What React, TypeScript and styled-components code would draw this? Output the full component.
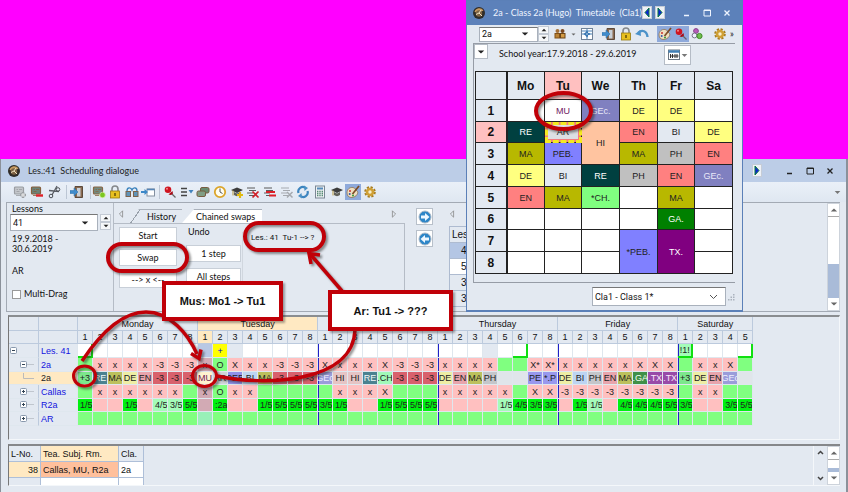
import React from "react";
import styled, { createGlobalStyle, css } from "styled-components";

const GlobalStyle = createGlobalStyle`
  * { box-sizing: border-box; }
  body { margin: 0; background: #ff00ff; }
  button, input, select { font: inherit; color: inherit; margin: 0; }
`;

const FACE = "#e3e9f1";
const GREEN = "#80ff80";
const BRIGHT = "#00f010";
const MINT = "#a4fcb8";
const PINK = "#ffc0c0";
const RED = "#d8606c";
const MARK = "#c00008";

/* ---------- shared parts ---------- */

const Desktop = styled.div`
  position: relative;
  min-height: 100vh;
  padding-top: 159px;
  display: flex;
  flex-direction: column;
  background: #ff00ff;
  color: #111;
  font: 9px/10px Lato, "Liberation Sans", sans-serif;
`;

const TitleBar = styled.header<{ $active?: boolean }>`
  display: flex;
  align-items: center;
  height: ${(p) => (p.$active ? 24 : 23)}px;
  padding: ${(p) => (p.$active ? "0 7px 0 5px" : "0 8px 0 6px")};
  background: ${(p) => (p.$active ? "#5c81ba" : "#bccde7")};
  color: ${(p) => (p.$active ? "#eef4ff" : "#222")};
`;

const Title = styled.h1`
  margin: 0 0 0 7px;
  font: 9px/12px Lato, sans-serif;
  white-space: pre;
`;

const Spacer = styled.div`
  flex: 1;
`;

const IconButton = styled.button<{ $on?: boolean; $w?: number }>`
  width: ${(p) => p.$w ?? 16}px;
  height: 16px;
  padding: 0;
  border: 0;
  display: flex;
  align-items: center;
  justify-content: center;
  background: ${(p) => (p.$on ? "#8faadb" : "transparent")};
`;

const NavButton = styled.button`
  width: 10px;
  height: 13px;
  padding: 0;
  border: 1px solid #c5ccd6;
  background: #eef1f6;
  display: flex;
  align-items: center;
  justify-content: center;
`;

const NavPair = styled.div`
  display: flex;
  align-self: flex-start;
  gap: 3px;
  padding: 5px 0 0;
`;

const WindowButtons = styled.div`
  display: flex;
  gap: 4px;
`;

const MainControls = styled.div`
  margin-left: 20px;
`;

const Separator = styled.span`
  width: 1px;
  height: 14px;
  margin-left: 3px;
  background: #bcc6d4;
`;

const PlainButton = styled.button`
  height: 17px;
  padding: 0;
  border: 1px solid #c8cfd8;
  background: #fff;
  text-align: center;
  display: block;
  width: 100%;
`;

const ComboBox = styled.label<{ $w: number; $h: number }>`
  display: grid;
  grid-template-columns: 1fr 16px;
  width: ${(p) => p.$w}px;
  height: ${(p) => p.$h}px;
  border: 1px solid #a9b1bc;
  border-top-color: #777;
  background: #fff;
  align-items: center;
  font: 9px/12px Roboto, sans-serif;
  select {
    grid-area: 1 / 1 / 2 / 3;
    appearance: none;
    border: 0;
    background: transparent;
    padding: 0 0 0 2px;
    height: 100%;
    width: 100%;
    outline: 0;
  }
  svg {
    grid-area: 1 / 2;
    pointer-events: none;
  }
`;

const Spinner = styled.div`
  display: flex;
  flex-direction: column;
  width: 11px;
  button {
    height: 8px;
    padding: 0;
    border: 1px solid #c3cad4;
    background: #f6f8fa;
    display: flex;
    align-items: center;
    justify-content: center;
  }
`;

const Triangle = ({ dir, size = 5, color = "#222", hollow = false }: { dir: "up" | "down" | "left" | "right"; size?: number; color?: string; hollow?: boolean }) => {
  const points = { up: "1,7 5,3 9,7", down: "1,3 9,3 5,7", left: "7,1 3,5 7,9", right: "3,1 7,5 3,9" }[dir];
  return (
    <svg width={size + 3} height={size + 3} viewBox="0 0 10 10" aria-hidden="true">
      <polygon points={points} fill={hollow ? "none" : color} stroke={hollow ? color : "none"} />
    </svg>
  );
};

/* ---------- icons ---------- */

const Svg = ({ children }: { children: React.ReactNode }) => (
  <svg width="14" height="14" viewBox="0 0 14 14" fill="none" aria-hidden="true">{children}</svg>
);

const board = (fill: string, stroke: string) => (
  <>
    <rect x="1.5" y="2" width="9" height="7" rx="1" fill={fill} stroke={stroke} strokeWidth="1.2" />
    <path d="M3.500 4.500h1.500M6 4.500h3M3.500 6.500h3M3 10.500h4" stroke={stroke} strokeWidth=".8" />
  </>
);
const lines = (color: string) => <path d="M1 3h8M3 5.500h7M1 8h6M3 10.500h5" stroke={color} strokeWidth="1.200" />;
const cap = <><path d="M1 5l6-2.500L13 5 7 8z" fill="#3c3c3c" /><path d="M4 7v3c2 1.500 4 1.500 6 0V7L7 8.500z" fill="#62625a" /><path d="M3 5.500v5" stroke="#b89a40" /></>;

const icons: Record<string, React.ReactNode> = {
  app: <><circle cx="7" cy="7" r="6" fill="#302c28" /><path d="M2.500 6a5 5 0 0 1 9-1.500L7 7z" fill="#c79a62" /><circle cx="7" cy="7.500" r="3.200" fill="#7d6244" /><path d="M4 8.500l3-1.500 3 3M7 7l2-3" stroke="#eee0c0" /></>,
  add: <>{board("#c3c6ca", "#9a9da2")}<path d="M10 7v6M7 10h6" stroke="#9c9fa4" strokeWidth="2.500" /><path d="M10 8v4M8 10h4" stroke="#eee" /></>,
  remove: <>{board("#6a8278", "#875f3c")}<path d="M6 10.500h7" stroke="#e02028" strokeWidth="2.400" /></>,
  cut: <><path d="M10 1L5 10M2 5.500l10 1" stroke="#5b5f66" strokeWidth="1.300" /><circle cx="4" cy="11" r="1.800" stroke="#4b4f55" /><circle cx="11" cy="4.500" r="1.800" stroke="#4b4f55" /></>,
  door: <><path d="M5 1.500h7.500v11H5z" fill="#8a6a50" stroke="#5c4a3c" /><path d="M7 3h3.500v8.500H7z" fill="#c8cfd6" /><path d="M0 5.500h4V3l4 4-4 4V8.500H0z" fill="#3f8ccc" stroke="#2a6da6" strokeWidth=".5" /></>,
  ok: <>{board("#728a80", "#8a6644")}<circle cx="10.500" cy="10" r="2.800" fill="#7cc820" stroke="#d8f0a8" strokeWidth=".7" /></>,
  lock: <><path d="M4 6V4a3 3 0 0 1 6 0v2" stroke="#85888c" strokeWidth="1.600" /><rect x="2.500" y="6" width="9" height="7" fill="#e8c020" stroke="#9a7a10" strokeWidth=".8" /><path d="M7 8v3" stroke="#66500a" strokeWidth="1.500" /></>,
  swap: <><path d="M2 6c0-4 4-4 5-1 1-3 5-3 5 1" stroke="#3d83bd" strokeWidth="1.400" /><rect x="1" y="6.500" width="4.500" height="5" fill="#5f93b8" stroke="#7d624c" /><rect x="8.500" y="6.500" width="4.500" height="5" fill="#5f93b8" stroke="#7d624c" /></>,
  move: <><rect x="6" y="4" width="7.500" height="7" fill="#fff" stroke="#8490a0" /><path d="M6 4.500h7.500" stroke="#5585b8" strokeWidth="1.600" /><path d="M0 6h3.500V4L7 7 3.500 10V8H0z" fill="#3d88c8" /></>,
  pin: <><path d="M8 8l4.500 4.500" stroke="#666" strokeWidth="1.300" /><circle cx="5" cy="4.700" r="3.300" fill="#d01420" /><path d="M5.500 9.500L9.500 6l.5 2.500-2 1.500z" fill="#a80c18" /><circle cx="4" cy="3.700" r="1" fill="#f08a8a" /></>,
  list: <><path d="M1 3.500h6M1 7h6M1 10.500h6" stroke="#444" strokeWidth="1.300" /><path d="M8.500 5h5L11 8.500z" fill="#4384bd" /></>,
  boards: <><rect x="4.500" y="2.500" width="8.500" height="5.500" rx="1.500" fill="#698b70" stroke="#785c40" /><rect x="1" y="6" width="8.500" height="5.500" rx="1.500" fill="#819e84" stroke="#785c40" /></>,
  clock: <><circle cx="7" cy="7" r="5.200" fill="#fffdf0" stroke="#dca52a" strokeWidth="1.800" /><path d="M7 3.500V7l2.500 1.500" stroke="#555" /></>,
  capAdd: <>{cap}<path d="M10 7v6M7 10h6" stroke="#e0ba10" strokeWidth="2.200" /></>,
  linesX: <>{lines("#5a5a5a")}<path d="M6.500 6.500l6 6M12.500 6.500l-6 6" stroke="#cf2028" strokeWidth="1.700" /></>,
  linesMinus: <>{lines("#5a5a5a")}<path d="M3 7h9M6 10.500h7" stroke="#dc2028" strokeWidth="2" /></>,
  linesOff: <>{lines("#a5a9af")}<path d="M7 7l5.500 5.500M12.500 7L7 12.500" stroke="#a5a9af" strokeWidth="1.500" /></>,
  refresh: <><path d="M2.500 8a4.500 4.500 0 0 1 7-5M11.500 6a4.500 4.500 0 0 1-7 5" stroke="#3d85bf" strokeWidth="2.200" /><path d="M8 .5l4 2.500-3.500 3zM6 13.500L2 11l3.500-3z" fill="#4b91c5" /></>,
  calc: <><rect x="2.500" y="1" width="9" height="12" fill="#eef1f4" stroke="#7b8794" /><path d="M4 3.500h6" stroke="#568bb9" strokeWidth="2" /><path d="M4 6.500h6M4 8.500h6M4 10.500h6" stroke="#568b74" strokeWidth="1.300" strokeDasharray="1.400 .9" /></>,
  cap,
  palette: <><path d="M1 8C1 4 4 2 7 2.500S9 5 11 6s0 6-5 6.500C3 12.700 1 11 1 8z" fill="#efdfc0" stroke="#8b7358" strokeWidth=".8" /><circle cx="4" cy="6" r="1" fill="#c33" /><circle cx="3.700" cy="9" r="1" fill="#35a" /><circle cx="7" cy="10.500" r="1" fill="#393" /><path d="M13 1L6.500 9" stroke="#7c4c26" strokeWidth="1.700" /></>,
  gear: <><circle cx="7" cy="7" r="4.800" stroke="#a87c20" strokeWidth="2" strokeDasharray="2.200 1.570" /><circle cx="7" cy="7" r="3" stroke="#cfa035" strokeWidth="2.600" fill="#f8eecb" /></>,
  people: <><circle cx="4.500" cy="4" r="2" fill="#a47038" /><circle cx="9.500" cy="4" r="2" fill="#7a4820" /><rect x="2" y="6.500" width="4.500" height="4.500" fill="#ba8234" stroke="#805018" /><rect x="7.500" y="6.500" width="4.500" height="4.500" fill="#d29a44" stroke="#6b4518" /></>,
  grid: <><rect x="1.500" y="1.500" width="11" height="11" fill="#fff" stroke="#6f8298" /><path d="M7 2v10M2 7h10M2 4h10" stroke="#4a83b9" /><path d="M7 3.500L9 6H5zM7 10.500L5 8h4zM3.500 7L6 5v4zM10.500 7L8 5v4z" fill="#3877b2" /></>,
  undo: <><path d="M3 6c4-4 9-2 9.500 4" stroke="#4b92c9" strokeWidth="2.400" /><path d="M0 7l5.500-4 .5 6z" fill="#4b92c9" /></>,
  venn: <><circle cx="6" cy="4" r="2.400" fill="#b85bbc" stroke="#85458a" /><circle cx="4.500" cy="8.500" r="2.400" fill="#eef" stroke="#778" /><circle cx="9.500" cy="9" r="2.600" fill="#6fc04c" stroke="#428a28" /></>,
  calendar: <><rect x="1.500" y="2" width="11" height="9.500" fill="#fff" stroke="#6d7884" /><path d="M1.500 3.500h11" stroke="#417fb5" strokeWidth="2.500" /><path d="M3.500 6v4M5.500 6v4M8 6v4M10 6v4M3.500 8h8" stroke="#333" /></>,
  right: <><circle cx="7" cy="7" r="6" fill="#2d86c8" stroke="#a8b8c8" /><path d="M3 5.500h4V3l4.500 4L7 11V8.500H3z" fill="#eef7ff" /></>,
  left: <><circle cx="7" cy="7" r="6" fill="#2d86c8" stroke="#a8b8c8" /><path d="M11 5.500H7V3L2.500 7 7 11V8.500h4z" fill="#eef7ff" /></>,
  min: <path d="M4 9.500h5" stroke="currentColor" strokeWidth="1.500" />,
  max: <path d="M4 4h6.500v6H4zM4 4.500h6.500" stroke="currentColor" />,
  close: <path d="M4.500 4.500l5 5M9.500 4.500l-5 5" stroke="currentColor" strokeWidth="1.300" />,
};

const Icon = ({ name }: { name: string }) => <Svg>{icons[name]}</Svg>;

const NavArrow = ({ flip }: { flip?: boolean }) => (
  <svg width="8" height="11" viewBox="0 0 8 11" aria-hidden="true">
    <path d={flip ? "M6 1v9L2 5.500z" : "M2 1v9l4-4.500z"} fill="#0a20d8" stroke="#0c7a3c" />
  </svg>
);

const Tool = ({ name, label, on }: { name: string; label: string; on?: boolean }) => (
  <IconButton type="button" aria-label={label} $on={on}><Icon name={name} /></IconButton>
);

const WindowControls = () => (
  <WindowButtons>
    {["min", "max", "close"].map((n) => <Tool key={n} name={n} label={n} />)}
  </WindowButtons>
);

/* ---------- main window ---------- */

const MainWindow = styled.main`
  flex: 1;
  display: flex;
  flex-direction: column;
  background: ${FACE};
  border: solid #8b919a;
  border-width: 0 2px 1px 1px;
`;

const Toolbar = styled.div`
  display: flex;
  align-items: center;
  height: 20px;
  padding: 0 5px 0 10px;
  background: linear-gradient(#eaf0f8, #dfe7f1);
`;

const ToolGroup = styled.div<{ $w: number; $m?: number }>`
  display: flex;
  justify-content: space-between;
  width: ${(p) => p.$w}px;
  margin: 0 ${(p) => p.$m ?? 4}px;
`;

const Upper = styled.section`
  display: flex;
  height: 110px;
  margin: 0 6px 0 5px;
  border: solid #a3aab4;
  border-width: 1px 0 1px 1px;
`;

const LessonPanel = styled.div`
  width: 107px;
  padding: 1px 2px 0 3px;
  border-right: 1px solid #b5bcc6;
`;

const FieldRow = styled.div`
  display: flex;
  gap: 2px;
`;

const FieldLabel = styled.label`
  display: block;
  height: 10px;
  padding-left: 2px;
`;

const Info = styled.p<{ $gap: number }>`
  margin: ${(p) => p.$gap}px 0 0 2px;
`;

const CheckLabel = styled.label`
  display: flex;
  align-items: center;
  gap: 3px;
  margin: 13px 0 0 2px;
  input {
    appearance: none;
    width: 9px;
    height: 9px;
    border: 1px solid #999;
    background: #fff;
  }
`;

const TabArea = styled.div`
  width: 291px;
  display: flex;
  flex-direction: column;
`;

const TabStrip = styled.div`
  display: flex;
  align-items: flex-end;
  height: 20px;
  padding: 0 5px 0 1px;
`;

const Tab = styled.button<{ $on?: boolean }>`
  height: 14px;
  border: 0;
  padding: ${(p) => (p.$on ? "0 7px 0 14px" : "0 6px 0 20px")};
  background: ${(p) => (p.$on ? "#fff" : "linear-gradient(125deg, transparent 10px, #98a0aa 10px, #98a0aa 11px, transparent 11px)")};
  border-top: 1px solid #aab1bb;
  clip-path: polygon(12px 0, 100% 0, 100% 100%, 0 100%);
`;

const StripArrow = styled.button`
  width: 12px;
  height: 16px;
  padding: 0;
  border: 0;
  background: transparent;
`;

const TabBody = styled.div`
  flex: 1;
  display: flex;
  gap: 8px;
  padding: 3px 4px 0 5px;
  border: solid #b5bcc6;
  border-width: 1px 1px 0 0;
`;

const ActionColumn = styled.div`
  display: flex;
  flex-direction: column;
  gap: 5px;
  width: 58px;
`;

const UndoGroup = styled.fieldset`
  width: 58px;
  margin: 0;
  padding: 8px 1px 0;
  border: 0;
  border-right: 1px solid #d1d7df;
  display: flex;
  flex-direction: column;
  gap: 6px;
  legend {
    padding: 0 0 0 2px;
  }
`;

const SwapInfo = styled.output`
  padding-top: 5px;
  white-space: pre;
  font: 8px/12px Roboto, sans-serif;
`;

const MoveColumn = styled.div`
  display: flex;
  flex-direction: column;
  gap: 5px;
  padding: 5px 12px 0 11px;
  button {
    width: 17px;
    height: 17px;
    background: #fff;
    border: 1px solid #b8c0ca;
  }
`;

const LessonTable = styled.table`
  border-collapse: collapse;
  background: #fff;
  font: 10px/14px "Liberation Sans", sans-serif;
  margin: 3px 0 0 4px;
  td, th {
    height: 16px;
    width: 60px;
    padding: 0 0 0 2px;
    border: 1px solid #aebbd0;
    font-weight: 400;
    text-align: left;
    background: #fff;
  }
  th { background: ${FACE}; }
  td { padding-left: 11px; }
  tr:nth-child(2) td { background: #b4c6e4; }
  tr:nth-child(n+4) td { background: ${FACE}; }
`;

const Scroll = styled.div`
  width: 13px;
  display: flex;
  flex-direction: column;
  background: #a9bbd8;
  border: 1px solid #cdd3db;
  button {
    height: 12px;
    padding: 0;
    border: 0;
    background: #fff;
    display: flex;
    align-items: center;
    justify-content: center;
  }
`;

const Thumb = styled.div<{ $h: number }>`
  height: ${(p) => p.$h}px;
  background: #fff;
  border-top: 1px solid #aaa;
`;

const ScrollBar = ({ thumb }: { thumb: number }) => (
  <Scroll>
    <button type="button" aria-label="Scroll up"><Triangle dir="up" color="#666" /></button>
    <Thumb $h={thumb} />
    <Spacer />
    <button type="button" aria-label="Scroll down"><Triangle dir="down" color="#666" /></button>
  </Scroll>
);

/* ---------- schedule grid ---------- */

const GridPanel = styled.section`
  height: 125px;
  margin: 3px 6px 0 7px;
  border: solid #f4f7fa;
  border-width: 2px 1px 1px 1px;
  border-top-color: #8a8d90;
  border-left-color: #777;
`;

const GridTable = styled.table`
  width: 744px;
  table-layout: fixed;
  border-collapse: separate;
  border-spacing: 0;
  font: 9px/12px "Liberation Sans", sans-serif;
  th, td {
    padding: 0;
    font-weight: 400;
    overflow: hidden;
    white-space: nowrap;
    text-align: center;
    border-right: 1px solid #dfe7ee;
    border-bottom: 1px solid #dfe7ee;
  }
`;

const GridRow = styled.tr<{ $h: number }>`
  height: ${(p) => p.$h}px;
`;

const DayHead = styled.th<{ $on?: boolean }>`
  && {
    background: ${(p) => (p.$on ? "#ffe9c2" : FACE)};
    border-color: #bccadd;
  }
`;

const TreeCell = styled.td<{ $on?: boolean }>`
  && {
    background: ${(p) => (p.$on ? "#ffe9c2" : FACE)};
    border-right-color: ${(p) => (p.$on ? "#ffe9c2" : "#bccadd")};
  }
`;

const TreeInner = styled.div<{ $level: number }>`
  display: flex;
  padding-left: ${(p) => p.$level * 10}px;
  height: 10px;
`;

const Expander = styled.button`
  width: 15px;
  height: 9px;
  padding: 0;
  border: 0;
  background: none;
  display: flex;
`;

const NameCell = styled.th<{ $on?: boolean }>`
  && {
    text-align: left;
    padding-left: 2px;
    color: ${(p) => (p.$on ? "#222" : "#1414e0")};
    background: ${(p) => (p.$on ? "#ffe9c2" : FACE)};
  }
`;

const Slot = styled.td<{ $bg: string; $fg?: string; $start?: boolean; $bracket?: boolean }>`
  && {
    background: ${(p) => p.$bg};
    color: ${(p) => p.$fg ?? "#222"};
    ${(p) => p.$start && css`box-shadow: inset 1px 0 #2020c8;`}
    ${(p) => p.$bracket && css`border-right: 2px solid #10e010; border-bottom: 2px solid #10e010;`}
  }
`;

const SlotText = styled.span<{ $left?: boolean }>`
  display: flex;
  justify-content: ${(p) => (p.$left ? "flex-start" : "center")};
  padding-left: ${(p) => (p.$left ? 2 : 0)}px;
  height: 12px;
  overflow: hidden;
`;

type Cell = { t?: string; bg: string; fg?: string; left?: boolean; bracket?: boolean };

const subjects: Record<string, [string, string, string?]> = {
  "+3": ["+3", "#7ce88c"], RE: ["RE", "#4a8290", "#f3f8f8"], MA: ["MA", "#bcc05c"], DE: ["DE", "#eeeea4"],
  EN: ["EN", "#e8a4ac"], "-3": ["-3", RED], MU: ["MU", "#fff3d0", "#702050"], AR: ["AR", "#cfd4d8"],
  PB: ["PEB", "#9090ea"], BI: ["BI", "#bcd4f2"], GE: ["GEc", "#9a9cda", "#eef"], HI: ["HI", "#e6c4c4"],
  CH: [".CH", "#a0f8b8"], PH: ["PH", "#c4c6ca"], _: ["", "#e0e5ea"], PE: ["PE", "#9898ee"],
  "*P": ["*.P", "#9898ee"], GA: [".GA", "#409048", "#f3fff3"], TX: [".TX", "#984aa8", "#f8e8fc"],
};

const parse = (line: string, make: (token: string, index: number) => Cell): Cell[] => line.split(/\s+/).map(make);

const mark = (token: string, i: number): Cell => {
  const bg = i === 8 ? "#d2aab4" : token === "g" || token === "O" ? GREEN : PINK;
  return { t: token === "g" ? "" : token, bg };
};

const room = (token: string, i: number): Cell => {
  if (token === "p") return { bg: i === 8 ? "#d2aab4" : PINK };
  const light = token.startsWith("l");
  return { t: light ? token.slice(1) : token, bg: light ? MINT : BRIGHT, left: true };
};

const lesson: Cell[] = Array.from({ length: 45 }, (_, i) => {
  if (i === 0 || i === 29 || i === 44) return { bg: "#fff", bracket: true };
  if (i === 8) return { bg: "#b8c8e4" };
  if (i === 9) return { t: "+", bg: "#ffff00", fg: "#0000d0" };
  if (i === 10 || i === 27) return { bg: FACE };
  if (i === 40) return { t: "!1!", bg: MINT, bracket: true };
  return { bg: "#fff" };
});

const rows: { name: string; level: number; sign: string; on?: boolean; h: number; cells: Cell[] }[] = [
  { name: "Les. 41", level: 0, sign: "-", h: 14, cells: lesson },
  { name: "2a", level: 1, sign: "-", h: 14, cells: parse("g x x x x -3 -3 -3 x O X x x -3 -3 -3 X x x x X -3 -3 -3 x x x x g g X* X* x x x x x X X X g x x X g", mark) },
  { name: "2a", level: 1, sign: "", on: true, h: 13, cells: parse("+3 RE MA DE EN -3 -3 -3 MU AR PB BI MA -3 -3 -3 GE HI HI RE CH -3 -3 -3 DE EN MA PH _ _ PE *P DE BI PH EN MA GA TX TX +3 DE EN GE _", (k) => ({ t: subjects[k][0], bg: subjects[k][1], fg: subjects[k][2] })) },
  { name: "Callas", level: 1, sign: "+", h: 14, cells: parse("g x x x x x x g x O x x g g g g g x x x X g g g x x x x x g X X -3 -3 -3 -3 -3 -3 -3 -3 g x x g g", mark) },
  { name: "R2a", level: 1, sign: "+", h: 13, cells: parse("1/5 p p 1/5 p l4/5 l3/5 5/5 p :2a p p 1/5 5/5 5/5 5/5 3/5 1/5 p p 1/5 5/5 5/5 5/5 p p p p l1/5 4/5 3/5 3/5 p 1/5 l1/5 p 4/5 4/5 4/5 5/5 3/5 p p 3/5 5/5", room) },
  { name: "AR", level: 1, sign: "+", h: 14, cells: Array.from({ length: 45 }, (_, i) => ({ bg: i === 8 ? "#98f0b8" : GREEN })) },
];

const days = [["Monday", 8], ["Tuesday", 8], ["Wednesday", 8], ["Thursday", 8], ["Friday", 8], ["Saturday", 5]] as const;
const periods = days.flatMap(([, n]) => Array.from({ length: n }, (_, i) => i + 1));

const ScheduleGrid = () => (
  <GridTable>
    <colgroup>
      <col width="30" />
      <col width="39" />
      {periods.map((_, i) => <col key={i} width="15" />)}
    </colgroup>
    <thead>
      <GridRow $h={14}>
        <DayHead /><DayHead />
        {days.map(([d, n]) => <DayHead key={d} colSpan={n} $on={d === "Tuesday"}>{d}</DayHead>)}
      </GridRow>
      <GridRow $h={13}>
        <DayHead /><DayHead />
        {periods.map((p, i) => <DayHead key={i} $on={i === 8}>{p}</DayHead>)}
      </GridRow>
    </thead>
    <tbody>
      {rows.map((r, k) => (
        <GridRow key={k} $h={r.h}>
          <TreeCell $on={r.on}>
            <TreeInner $level={r.level}>
              {r.sign ? (
                <Expander type="button" aria-label={`Toggle ${r.name}`}>
                  <svg width="15" height="9" viewBox="0 0 15 9" fill="none">
                    {r.level > 0 && <path d="M8 4.500h7" stroke="#c0c6ce" />}
                    <rect x="1.500" y="1.500" width="6" height="6" rx="1" fill="#fff" stroke="#8898ac" />
                    <path d={r.sign === "+" ? "M3 4.500h3M4.500 3v3" : "M3 4.500h3"} stroke="#345" />
                  </svg>
                </Expander>
              ) : (
                <svg width="15" height="10" viewBox="0 0 15 10" fill="none"><path d="M4.500 0v5.500H15" stroke="#bbb" /></svg>
              )}
            </TreeInner>
          </TreeCell>
          <NameCell scope="row" $on={r.on}>{r.name}</NameCell>
          {r.cells.map((c, i) => (
            <Slot key={i} $bg={c.bg} $fg={c.fg} $bracket={c.bracket} $start={i >= 16 && i % 8 === 0}>
              <SlotText $left={c.left}>{c.t}</SlotText>
            </Slot>
          ))}
        </GridRow>
      ))}
    </tbody>
  </GridTable>
);

const DetailPanel = styled.section`
  display: flex;
  height: 42px;
  margin: 4px 6px 6px 7px;
  border: solid #f4f7fa;
  border-width: 2px 0 1px 1px;
  border-top-color: #85878a;
  border-left-color: #777;
`;

const DetailClip = styled.div`
  flex: 1;
  overflow: hidden;
`;

const DetailTable = styled.table`
  table-layout: fixed;
  width: 135px;
  border-collapse: separate;
  border-spacing: 0;
  font: 9px/14px "Liberation Sans", sans-serif;
  th, td {
    height: 16px;
    padding: 0 2px;
    font-weight: 400;
    text-align: left;
    white-space: nowrap;
    border: solid #aebfd8;
    border-width: 0 1px 1px 0;
    background: ${FACE};
  }
  th:nth-child(2), tr:nth-child(2) td:first-child { background: #ffe9c2; }
  td:first-child { text-align: right; }
  td:nth-child(n+2) { background: #fff; }
  tr:nth-child(2) td:nth-child(2) { background: #ffc09c; }
`;

const Chevrons = styled.div`
  width: 13px;
  margin-right: 1px;
  padding: 4px 0;
  border-left: 1px solid #f4f7fa;
  display: flex;
  flex-direction: column;
  justify-content: space-between;
  align-items: center;
`;

/* ---------- timetable window ---------- */

const TimetableWindow = styled.aside`
  position: absolute;
  left: 466px;
  top: 0;
  width: 277px;
  background: ${FACE};
  border: 1px solid #5b80b8;
  border-bottom-width: 2px;
`;

const SubToolbar = styled.div`
  display: flex;
  align-items: center;
  height: 18px;
  padding-left: 12px;
`;

const Frame = styled.div`
  margin: 0 7px 0 6px;
  border: solid #969ca6;
  border-width: 1px 0 1px 1px;
  padding-bottom: 8px;
`;

const YearBar = styled.div`
  display: flex;
  align-items: flex-start;
  height: 27px;
`;

const DropButton = styled.button<{ $w: number; $h: number }>`
  width: ${(p) => p.$w}px;
  height: ${(p) => p.$h}px;
  padding: 0;
  border: 1px solid #b5bcc6;
  background: #fff;
  display: flex;
  align-items: center;
  justify-content: center;
`;

const YearText = styled.span`
  width: 165px;
  padding: 5px 0 0 11px;
  white-space: nowrap;
`;

const CalendarSlot = styled.div`
  padding: 1px 0 0 11px;
`;

const WeekTable = styled.table`
  width: 257px;
  margin-left: 1px;
  table-layout: fixed;
  border-collapse: collapse;
  font: 9px/12px "Liberation Sans", sans-serif;
  th, td {
    padding: 0;
    border: 1px solid #222;
    text-align: center;
  }
  th:first-child { border-right-width: 2px; }
`;

const WeekHead = styled.th<{ $on?: boolean }>`
  background: ${(p) => (p.$on ? "#ffc0c0" : FACE)};
  font-size: 12px;
`;

const WeekCell = styled.td<{ $bg: string; $fg?: string; $selected?: boolean }>`
  background: ${(p) => p.$bg};
  color: ${(p) => p.$fg ?? "#222"};
  ${(p) => p.$selected && css`
    box-shadow: inset 0 0 0 3px #f47c80;
    outline: 3px dashed #f4ea20;
    outline-offset: -3px;
  `}
`;

const week: Record<string, [string, string?]> = {
  MU: ["#fff", "#702060"], "GEc.": ["#8080c0", "#e8e8f8"], DE: ["#ffff80"], RE: ["#004040", "#fff"], AR: ["#dcdfe4"],
  HI: ["#ffc4a0"], EN: ["#ff8080"], BI: [FACE], MA: ["#b8b800"], "PEB.": ["#8080ff"], PH: ["#c0c0c0"],
  "*CH.": ["#80ff80"], "GA.": ["#008000", "#fff"], "*PEB.": ["#8080ff"], "TX.": ["#800080", "#fff"], "": ["#fff"],
};
const weekRows: { h: number; c: (string | [string, number])[] }[] = [
  { h: 22, c: ["", "MU", "GEc.", "DE", "DE", ""] },
  { h: 21, c: ["RE", "AR", ["HI", 2], "EN", "BI", "DE"] },
  { h: 22, c: ["MA", "PEB.", "MA", "PH", "EN"] },
  { h: 22, c: ["DE", "BI", "RE", "PH", "EN", "GEc."] },
  { h: 22, c: ["EN", "MA", "*CH.", "", "MA", ""] },
  { h: 21, c: ["", "", "", "", "GA.", ""] },
  { h: 22, c: ["", "", "", ["*PEB.", 2], ["TX.", 2], ""] },
  { h: 22, c: ["", "", "", ""] },
];

const FooterBar = styled.div`
  display: flex;
  justify-content: flex-end;
  align-items: center;
  gap: 2px;
  height: 27px;
  padding: 2px 7px 2px 0;
`;

/* ---------- annotations ---------- */

const Marks = styled.svg`
  position: absolute;
  left: 0;
  top: 0;
  pointer-events: none;
  filter: drop-shadow(2px 2px 1px rgba(40, 40, 40, 0.5));
`;

const Callout = styled.div<{ $x: number; $y: number; $w: number; $h: number }>`
  position: absolute;
  left: ${(p) => p.$x}px;
  top: ${(p) => p.$y}px;
  width: ${(p) => p.$w}px;
  height: ${(p) => p.$h}px;
  display: flex;
  align-items: center;
  justify-content: center;
  background: #fff;
  border: 4px solid ${MARK};
  font: bold 11px/14px "Liberation Sans", sans-serif;
  color: #111;
  box-shadow: 2px 2px 2px rgba(40, 40, 40, 0.4);
`;

export default function App() {
  return (
    <Desktop>
      <GlobalStyle />
      <MainWindow>
        <TitleBar>
          <Icon name="app" />
          <Title>{"Les.:41  Scheduling dialogue"}</Title>
          <Spacer />
          <NavButton type="button" aria-label="Next window"><NavArrow /></NavButton>
          <MainControls><WindowControls /></MainControls>
        </TitleBar>
        <Toolbar>
          <ToolGroup $w={50} $m={1}>
            <Tool name="add" label="Add" /><Tool name="remove" label="Remove" /><Tool name="cut" label="Cut" />
          </ToolGroup>
          <Separator />
          <ToolGroup $w={16} $m={2}><Tool name="door" label="Exit" /></ToolGroup>
          <Separator />
          <ToolGroup $w={65} $m={0}>
            <Tool name="ok" label="Confirm" /><Tool name="lock" label="Lock" /><Tool name="swap" label="Swap rooms" /><Tool name="move" label="Move" />
          </ToolGroup>
          <Separator />
          <ToolGroup $w={216} $m={2}>
            <Tool name="pin" label="Pin" /><Tool name="list" label="List" /><Tool name="boards" label="Rooms" /><Tool name="clock" label="Time" />
            <Tool name="capAdd" label="Add class" /><Tool name="linesX" label="Delete lines" /><Tool name="linesMinus" label="Remove line" />
            <Tool name="linesOff" label="Clear lines" /><Tool name="refresh" label="Refresh" /><Tool name="calc" label="Calculate" />
            <Tool name="cap" label="Class" /><Tool name="palette" label="Colours" on /><Tool name="gear" label="Settings" />
          </ToolGroup>
          <Spacer />
          <Triangle dir="down" size={4} color="#777" />
        </Toolbar>

        <Upper>
          <LessonPanel>
            <FieldLabel htmlFor="lesson">Lessons</FieldLabel>
            <FieldRow>
              <ComboBox $w={89} $h={17}>
                <select id="lesson" defaultValue="41"><option>41</option></select>
                <Triangle dir="down" />
              </ComboBox>
              <Spinner>
                <button type="button" aria-label="Next lesson"><Triangle dir="up" size={3} /></button>
                <button type="button" aria-label="Previous lesson"><Triangle dir="down" size={3} /></button>
              </Spinner>
            </FieldRow>
            <Info $gap={3}>19.9.2018 -<br />30.6.2019</Info>
            <Info $gap={12}>AR</Info>
            <CheckLabel><input type="checkbox" />Multi-Drag</CheckLabel>
          </LessonPanel>
          <TabArea>
            <TabStrip role="tablist">
              <StripArrow type="button" aria-label="Scroll tabs left"><Triangle dir="left" hollow color="#888" /></StripArrow>
              <Tab role="tab">History</Tab>
              <Tab role="tab" $on aria-selected>Chained swaps</Tab>
              <Spacer />
              <StripArrow type="button" aria-label="Scroll tabs right"><Triangle dir="right" hollow color="#888" /></StripArrow>
            </TabStrip>
            <TabBody>
              <ActionColumn>
                <PlainButton type="button">Start</PlainButton>
                <PlainButton type="button">Swap</PlainButton>
                <PlainButton type="button">{"--> x <--"}</PlainButton>
              </ActionColumn>
              <UndoGroup>
                <legend>Undo</legend>
                <PlainButton type="button">1 step</PlainButton>
                <PlainButton type="button">All steps</PlainButton>
              </UndoGroup>
              <SwapInfo>{"Les.: 41  Tu-1 --> ?"}</SwapInfo>
            </TabBody>
          </TabArea>
          <MoveColumn>
            <Tool name="right" label="Move right" />
            <Tool name="left" label="Move left" />
          </MoveColumn>
          <div>
            <TabStrip><StripArrow type="button" aria-label="Scroll left"><Triangle dir="left" hollow color="#888" /></StripArrow></TabStrip>
            <LessonTable>
              <tbody>
                <tr><th>Les.</th></tr><tr><td>4</td></tr><tr><td>5</td></tr><tr><td>3</td></tr><tr><td>3</td></tr>
              </tbody>
            </LessonTable>
          </div>
          <Spacer />
          <ScrollBar thumb={48} />
        </Upper>

        <GridPanel><ScheduleGrid /></GridPanel>

        <DetailPanel>
          <DetailClip>
            <DetailTable>
              <colgroup><col width="32" /><col width="78" /><col width="25" /></colgroup>
              <tbody>
                <tr><th>L-No.</th><th>Tea. Subj. Rm.</th><th>Cla.</th></tr>
                <tr><td>38</td><td>Callas, MU, R2a</td><td>2a</td></tr>
                <tr><td /><td /><td /></tr>
              </tbody>
            </DetailTable>
          </DetailClip>
          <Chevrons>
            <svg width="7" height="5" viewBox="0 0 7 5" fill="none"><path d="M1 4l2.500-2.500L6 4" stroke="#444" strokeWidth="1.500" /></svg>
            <svg width="7" height="5" viewBox="0 0 7 5" fill="none"><path d="M1 1l2.500 2.500L6 1" stroke="#444" strokeWidth="1.500" /></svg>
          </Chevrons>
          <ScrollBar thumb={9} />
        </DetailPanel>
      </MainWindow>

      <TimetableWindow>
        <TitleBar $active>
          <Icon name="app" />
          <Title>{"2a - Class 2a (Hugo)  Timetable  (Cla1)"}</Title>
          <NavPair>
            <NavButton type="button" aria-label="Previous"><NavArrow flip /></NavButton>
            <NavButton type="button" aria-label="Next"><NavArrow /></NavButton>
          </NavPair>
          <Spacer />
          <WindowControls />
        </TitleBar>
        <SubToolbar>
          <ComboBox $w={59} $h={15}>
            <select aria-label="Class" defaultValue="2a"><option>2a</option></select>
            <Triangle dir="down" />
          </ComboBox>
          <Spinner>
            <button type="button" aria-label="Next class"><Triangle dir="up" size={3} /></button>
            <button type="button" aria-label="Previous class"><Triangle dir="down" size={3} /></button>
          </Spinner>
          <ToolGroup $w={43} $m={3}>
            <Tool name="people" label="Classes" />
            <IconButton type="button" aria-label="More classes" $w={8}><Triangle dir="down" size={2} color="#666" /></IconButton>
            <Tool name="grid" label="Format" />
          </ToolGroup>
          <ToolGroup $w={49} $m={3}>
            <Tool name="door" label="Exit" /><Tool name="lock" label="Lock" /><Tool name="undo" label="Undo" />
          </ToolGroup>
          <ToolGroup $w={48} $m={4}>
            <Tool name="palette" label="Colours" on /><Tool name="pin" label="Pin" on /><Tool name="venn" label="Groups" />
          </ToolGroup>
          <ToolGroup $w={24} $m={3}>
            <Tool name="gear" label="Settings" />
            <IconButton type="button" aria-label="More" $w={8}>»</IconButton>
          </ToolGroup>
        </SubToolbar>
        <Frame>
          <YearBar>
            <DropButton type="button" aria-label="Options" $w={14} $h={15}><Triangle dir="down" /></DropButton>
            <YearText>School year:17.9.2018 - 29.6.2019</YearText>
            <CalendarSlot>
              <DropButton type="button" aria-label="Calendar" $w={27} $h={20}><Icon name="calendar" /><Triangle dir="down" size={4} color="#777" /></DropButton>
            </CalendarSlot>
          </YearBar>
          <WeekTable>
            <colgroup><col width="31" />{[38, 37, 38, 38, 37, 38].map((w, i) => <col key={i} width={w} />)}</colgroup>
            <thead>
              <GridRow $h={28}>
                <WeekHead />
                {["Mo", "Tu", "We", "Th", "Fr", "Sa"].map((d) => <WeekHead key={d} $on={d === "Tu"}>{d}</WeekHead>)}
              </GridRow>
            </thead>
            <tbody>
              {weekRows.map((r, i) => (
                <GridRow key={i} $h={r.h}>
                  <WeekHead scope="row" $on={i === 1}>{i + 1}</WeekHead>
                  {r.c.map((cell, j) => {
                    const [text, span] = typeof cell === "string" ? [cell, 1] : cell;
                    return <WeekCell key={j} rowSpan={span} $bg={week[text][0]} $fg={week[text][1]} $selected={text === "AR"}>{text}</WeekCell>;
                  })}
                </GridRow>
              ))}
            </tbody>
          </WeekTable>
        </Frame>
        <FooterBar>
          <ComboBox $w={134} $h={19}>
            <select aria-label="Layout" defaultValue="Cla1 - Class 1*"><option>Cla1 - Class 1*</option></select>
            <svg width="9" height="6" viewBox="0 0 9 6" fill="none"><path d="M1 1l3.500 3.500L8 1" stroke="#555" /></svg>
          </ComboBox>
          <svg width="7" height="8" viewBox="0 0 7 8" fill="#aab2bd"><path d="M5 1h1.500v1.500H5zM5 3.500h1.500V5H5zM5 6h1.500v1.500H5zM2.500 3.500H4V5H2.500zM2.500 6H4v1.500H2.500zM0 6h1.500v1.500H0z" /></svg>
        </FooterBar>
      </TimetableWindow>

      <Marks width="848" height="492" viewBox="0 0 848 492" fill="none" stroke={MARK} strokeWidth="4" aria-hidden="true">
        <rect x="108" y="244" width="79" height="27" rx="13.500" />
        <rect x="245" y="223" width="79" height="27" rx="13.500" />
        <ellipse cx="563.500" cy="111" rx="27.500" ry="18" />
        <ellipse cx="84.500" cy="376" rx="11" ry="10" strokeWidth="3" />
        <ellipse cx="204.500" cy="376" rx="12" ry="10.500" strokeWidth="3" />
        <path d="M82 361C96 340 118 312 146 312C170 312 188 334 197 354" strokeWidth="3.500" />
        <path d="M191 353.500l8 5 2-9" strokeWidth="3.500" />
        <path d="M217 376C262 386 353 384 355 330" strokeWidth="3.500" />
        <path d="M342 291L311 255" strokeWidth="3.500" />
        <path d="M311 264l-2-10.500 11 1.500" strokeWidth="3.500" />
      </Marks>
      <Callout $x={162} $y={281} $w={121} $h={40}>{"Mus: Mo1 -> Tu1"}</Callout>
      <Callout $x={328} $y={290} $w={125} $h={41}>{"Ar: Tu1 -> ???"}</Callout>
    </Desktop>
  );
}
